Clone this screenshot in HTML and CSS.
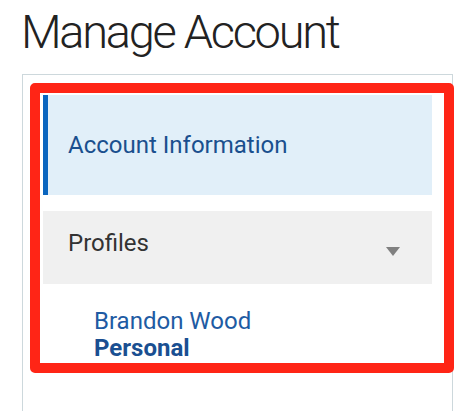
FILE: index.html
```html
<!DOCTYPE html>
<html>
<head>
<meta charset="utf-8">
<link rel="stylesheet" href="styles.css">
</head>
<body>
<h1 class="title">Manage Account</h1>
<div class="panel">
  <nav class="nav">
    <div class="nav-item active">Account Information</div>
    <div class="nav-group">
      <span>Profiles</span>
      <span class="caret"></span>
    </div>
    <div class="profile">
      <div class="profile-name">Brandon Wood</div>
      <div class="profile-type">Personal</div>
    </div>
  </nav>
  <div class="highlight"></div>
</div>
</body>
</html>
```
FILE: styles.css
```css
html, body {
  margin: 0;
  padding: 0;
  background: #fff;
}
body {
  font-family: Roboto, "Liberation Sans", Arial, sans-serif;
  width: 465px;
  height: 411px;
  overflow: hidden;
}
.title {
  margin: 0;
  padding: 4px 0 0 21px;
  font-weight: 300;
  font-size: 47px;
  line-height: 56px;
  letter-spacing: -2.3px;
  color: #222;
}
.panel {
  position: relative;
  margin: 14px 0 0 22px;
  width: 431px;
  height: 337px;
  border: 1px solid #cdd8dc;
  border-bottom: none;
  box-sizing: border-box;
  padding: 20px 20px 0 20px;
}
.nav {
  display: flex;
  flex-direction: column;
}
.nav-item {
  height: 100px;
  display: flex;
  align-items: center;
  padding-left: 20px;
  background: #e1eff9;
  border-left: 5px solid #0a65bf;
  color: #1a4f8e;
  font-size: 24px;
}
.nav-group {
  margin-top: 16px;
  height: 73px;
  background: #f0f0f0;
  display: flex;
  align-items: center;
  justify-content: space-between;
  padding: 0 32px 0 25px;
  color: #333;
  font-size: 24px;
}
.nav-group span:first-child {
  margin-top: -10px;
}
.caret {
  width: 0;
  height: 0;
  border-left: 7.5px solid transparent;
  border-right: 7.5px solid transparent;
  border-top: 9px solid #808080;
  margin-top: 8px;
}
.profile {
  padding: 24px 0 0 51px;
  font-size: 24px;
  line-height: 27px;
}
.profile-name {
  color: #1e5ba3;
}
.profile-type {
  color: #1a4f91;
  font-weight: 700;
}
.highlight {
  position: absolute;
  left: 7px;
  top: 8px;
  width: 424px;
  height: 290px;
  box-sizing: border-box;
  border: 10px solid #ff2516;
  border-radius: 5px;
  pointer-events: none;
}
```
